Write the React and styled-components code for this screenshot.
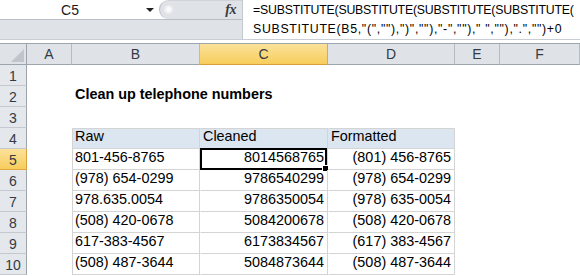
import React from "react";
import styled, { createGlobalStyle } from "styled-components";

const GlobalStyle = createGlobalStyle`
  html, body {
    margin: 0;
    padding: 0;
    background: #ffffff;
    overflow: hidden;
  }
`;

const columns = ["A", "B", "C", "D", "E", "F"];
const widths = [27, 45, 128, 128, 127, 45, 80];

// second line has many quotes, which run wider in the original font
const formula = [
  { text: "=SUBSTITUTE(SUBSTITUTE(SUBSTITUTE(SUBSTITUTE(", spacing: -0.2 },
  {
    text: 'SUBSTITUTE(B5,"(",""),")",""),"-",""),"\u00a0",""),".","")+0',
    spacing: 0.7,
  },
];

const phones = [
  ["801-456-8765", "8014568765", "(801) 456-8765"],
  ["(978) 654-0299", "9786540299", "(978) 654-0299"],
  ["978.635.0054", "9786350054", "(978) 635-0054"],
  ["(508) 420-0678", "5084200678", "(508) 420-0678"],
  ["617-383-4567", "6173834567", "(617) 383-4567"],
  ["(508) 487-3644", "5084873644", "(508) 487-3644"],
];

const Window = styled.div`
  width: 580px;
  height: 276px;
  overflow: hidden;
  background: #ffffff;
  font-family: "Liberation Sans", Arial, sans-serif;
  color: #000;
`;

const FormulaBar = styled.div`
  display: flex;
  height: 40px;
  border-bottom: 1px solid #c9ced4;
  box-sizing: border-box;
`;

const LeftPane = styled.div`
  width: 243px;
  display: flex;
  flex-direction: column;
  background: #dfe3e8;
  border-right: 1px solid #c4c9cf;
  box-sizing: border-box;
`;

const NameRow = styled.div`
  display: flex;
  height: 20px;
  border-bottom: 1px solid #b9bec5;
  box-sizing: border-box;
  background: #ffffff;
`;

const NameBox = styled.div`
  width: 159px;
  display: flex;
  align-items: center;
  font-size: 14px;
  color: #1a1a1a;
`;

const NameText = styled.span`
  width: 140px;
  text-align: center;
`;

const Arrow = styled.span`
  width: 0;
  height: 0;
  margin-left: 6px;
  border-left: 4px solid transparent;
  border-right: 4px solid transparent;
  border-top: 4px solid #222;
`;

const Handle = styled.div`
  flex: 1;
  position: relative;
  display: flex;
  align-items: center;
  justify-content: flex-end;
  padding-right: 6px;
  background: #dfe3e8;
  border-radius: 10px 0 0 10px;
  border-left: 1px solid #b9bec5;
  border-top: 1px solid #d0d4d9;
`;

const Grip = styled.span`
  position: absolute;
  left: 4px;
  top: 4px;
  width: 10px;
  height: 10px;
  border-radius: 50%;
  background: radial-gradient(circle at 45% 45%, #ffffff 0%, #eef0f3 45%, #c9cdd3 100%);
`;

const Fx = styled.span`
  font-family: "Liberation Serif", "Times New Roman", serif;
  font-style: italic;
  font-weight: bold;
  font-size: 14px;
  color: #3a3a3a;
  letter-spacing: -0.5px;
`;

const FormulaInput = styled.div`
  flex: 1;
  background: #ffffff;
  padding: 1px 0 0 10px;
  font-size: 12.3px;
  line-height: 19px;
  white-space: pre;
  color: #000;
`;

const FormulaLine = styled.div`
  letter-spacing: ${(p) => p.$spacing}px;
`;

const Strip = styled.div`
  height: 4px;
  border-bottom: 1px solid #9ea4ab;
  box-sizing: border-box;
`;

const Sheet = styled.div`
  display: grid;
  grid-template-columns: ${widths.map((w) => `${w}px`).join(" ")};
  grid-auto-rows: 21px;
`;

const Corner = styled.div`
  position: relative;
  background: #dfe3e8;
  border-right: 1px solid #9ea4ab;
  border-bottom: 1px solid #9ea4ab;
  box-sizing: border-box;
  &::after {
    content: "";
    position: absolute;
    right: 2px;
    bottom: 2px;
    border-left: 13px solid transparent;
    border-bottom: 13px solid #c1c5cb;
  }
`;

const ColHead = styled.div`
  display: flex;
  align-items: center;
  justify-content: center;
  box-sizing: border-box;
  font-size: 14px;
  color: #333a44;
  background: ${(p) =>
    p.$active ? "linear-gradient(#fbe29a, #f7cd5c)" : "#dfe3e8"};
  border-right: 1px solid ${(p) => (p.$active ? "#e2a93c" : "#b6bbc2")};
  border-bottom: 1px solid ${(p) => (p.$active ? "#d9a13a" : "#9ea4ab")};
`;

const RowHead = styled.div`
  display: flex;
  align-items: center;
  justify-content: center;
  box-sizing: border-box;
  font-size: 14px;
  color: #333a44;
  background: ${(p) =>
    p.$active ? "linear-gradient(#fbe29a, #f7cd5c)" : "#e4e7eb"};
  border-right: 1px solid ${(p) => (p.$active ? "#d9a13a" : "#9ea4ab")};
  border-bottom: 1px solid ${(p) => (p.$active ? "#e2a93c" : "#c5c9cf")};
  padding-top: 1px;
`;

const Cell = styled.div`
  position: relative;
  box-sizing: border-box;
  display: flex;
  align-items: flex-end;
  justify-content: ${(p) => (p.$right ? "flex-end" : "flex-start")};
  padding: 0 3px 3px 2px;
  font-size: 14.4px;
  line-height: 17px;
  font-weight: ${(p) => (p.$bold ? "bold" : "normal")};
  white-space: nowrap;
  background: ${(p) => (p.$head ? "#dce6f1" : "transparent")};
  border-right: 1px solid ${(p) => (p.$boxed ? "#d4d4d4" : "transparent")};
  border-bottom: 1px solid ${(p) => (p.$boxed ? "#d4d4d4" : "transparent")};
  border-left: 1px solid ${(p) => (p.$edge ? "#d4d4d4" : "transparent")};
  border-top: ${(p) => (p.$top ? "1px solid #d4d4d4" : "none")};
`;

const Selection = styled.div`
  position: absolute;
  top: -1px;
  left: -1px;
  right: 0;
  bottom: -1px;
  border: 2px solid #000;
  pointer-events: none;
`;

const FillHandle = styled.div`
  position: absolute;
  right: -4px;
  bottom: -4px;
  width: 5px;
  height: 5px;
  background: #000;
  border: 1px solid #fff;
`;

const buildRows = () => {
  const rows = [
    [null, null, null, null, null, null],
    [null, { text: "Clean up telephone numbers", bold: true }, null, null, null, null],
    [null, null, null, null, null, null],
    [
      null,
      { text: "Raw", boxed: true, head: true, edge: true },
      { text: "Cleaned", boxed: true, head: true },
      { text: "Formatted", boxed: true, head: true },
      null,
      null,
    ],
  ];
  phones.forEach(([raw, clean, fmt]) => {
    rows.push([
      null,
      { text: raw, boxed: true, edge: true },
      { text: clean, boxed: true, right: true },
      { text: fmt, boxed: true, right: true },
      null,
      null,
    ]);
  });
  return rows;
};

const App = () => {
  const rows = buildRows();
  return (
    <Window>
      <GlobalStyle />
      <FormulaBar>
        <LeftPane>
          <NameRow>
            <NameBox>
              <NameText>C5</NameText>
              <Arrow />
            </NameBox>
            <Handle>
              <Grip />
              <Fx>fx</Fx>
            </Handle>
          </NameRow>
        </LeftPane>
        <FormulaInput>
          {formula.map((line) => (
            <FormulaLine key={line.text} $spacing={line.spacing}>
              {line.text}
            </FormulaLine>
          ))}
        </FormulaInput>
      </FormulaBar>
      <Strip />
      <Sheet>
        <Corner />
        {columns.map((c) => (
          <ColHead key={c} $active={c === "C"}>
            {c}
          </ColHead>
        ))}
        {rows.map((row, i) => (
          <React.Fragment key={i}>
            <RowHead $active={i === 4}>{i + 1}</RowHead>
            {row.map((cell, j) => {
              if (!cell) return <Cell key={j} />;
              const active = i === 4 && j === 2;
              return (
                <Cell
                  key={j}
                  $boxed={cell.boxed}
                  $head={cell.head}
                  $edge={cell.edge}
                  $top={cell.head}
                  $right={cell.right}
                  $bold={cell.bold}
                >
                  {cell.text}
                  {active && (
                    <Selection>
                      <FillHandle />
                    </Selection>
                  )}
                </Cell>
              );
            })}
          </React.Fragment>
        ))}
      </Sheet>
    </Window>
  );
};

export default App;
